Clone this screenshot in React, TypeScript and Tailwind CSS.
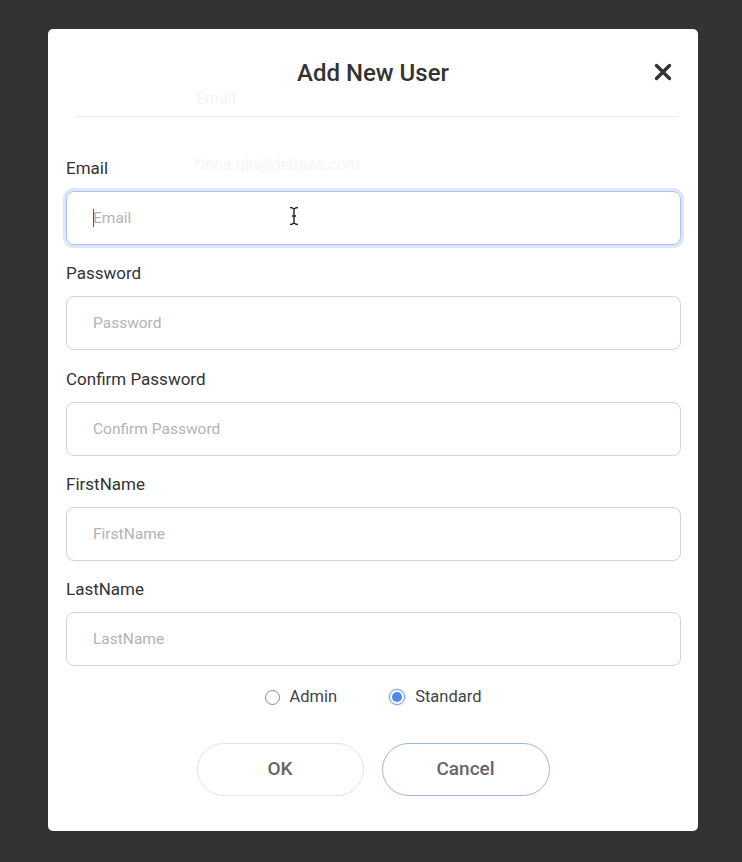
import React, { useState } from 'react';

const FIELDS = [
    { label: 'Email', placeholder: 'Email', focused: true },
    { label: 'Password', placeholder: 'Password' },
    { label: 'Confirm Password', placeholder: 'Confirm Password' },
    { label: 'FirstName', placeholder: 'FirstName' },
    { label: 'LastName', placeholder: 'LastName' },
];

const Radio: React.FC<{ label: string; checked: boolean; onClick: () => void }> = ({ label, checked, onClick }) => (
    <label className="flex items-center gap-[10px] cursor-pointer" onClick={onClick}>
        {checked ? (
            <span className="w-[16px] h-[16px] rounded-full border border-[#7aa2ea] bg-white flex items-center justify-center shadow-[0_0_0_1px_#dbe6fa]">
                <span className="w-[10px] h-[10px] rounded-full bg-[#4f87ec]"></span>
            </span>
        ) : (
            <span className="w-[15px] h-[15px] rounded-full border border-[#8a8a8a] bg-white"></span>
        )}
        <span className="text-[16.5px] leading-[20px] text-[#444]">{label}</span>
    </label>
);

const App: React.FC = () => {
    const [role, setRole] = useState<'admin' | 'standard'>('standard');

    return (
        <div className="w-full h-[862px] bg-[#333333] pt-[29px] pl-[48px] font-['Roboto',sans-serif]">
            <div className="relative w-[650px] h-[802px] bg-white rounded-[5px]">
                {/* ghost text left over from the page behind */}
                <span className="absolute left-[148px] top-[58px] text-[16px] text-[#f4f4f4]">Email</span>
                <span className="absolute left-[146px] top-[124px] text-[16px] text-[#f5f5f5]">*iona.qin@deltaas.com</span>

                {/* Header */}
                <div className="relative h-[87px] flex items-center justify-center">
                    <h2 className="text-[24px] font-medium text-[#333] leading-none">Add New User</h2>
                    <button className="absolute right-[26px] top-[34px] text-[#333]">
                        <svg width="18" height="18" viewBox="0 0 18 18">
                            <path d="M2.5 2.5 L15.5 15.5 M15.5 2.5 L2.5 15.5" stroke="currentColor" strokeWidth="3.4" strokeLinecap="round" />
                        </svg>
                    </button>
                </div>
                <div className="ml-[28px] mr-[20px] h-px bg-[#ececec]"></div>

                {/* Form */}
                <div className="px-[18px] pt-[41px] flex flex-col gap-[18.3px] relative">
                    {FIELDS.map(f => (
                        <div key={f.label}>
                            <div className="text-[17px] leading-[21px] text-[#333] mb-[12px]">{f.label}</div>
                            <div className="relative">
                                <input
                                    placeholder={f.placeholder}
                                    className={
                                        f.focused
                                            ? "w-[615px] h-[54px] rounded-[8px] border border-[#a9c3ec] shadow-[0_0_0_3px_#dbe6f8] pl-[26px] text-[15.5px] text-[#333] placeholder:text-[#b3b3b3] outline-none"
                                            : "w-[615px] h-[54px] rounded-[8px] border border-[#d3d3d3] pl-[26px] text-[15.5px] text-[#333] placeholder:text-[#b3b3b3] outline-none"
                                    }
                                />
                                {f.focused && (
                                    <>
                                        <span className="absolute left-[27px] top-[18px] w-px h-[18px] bg-[#555]"></span>
                                        <svg className="absolute left-[223px] top-[15px]" width="10" height="20" viewBox="0 0 10 20">
                                            <path d="M1 1.5 C3 1.5 4 2 5 3 C6 2 7 1.5 9 1.5 M5 3 V17 M1 18.5 C3 18.5 4 18 5 17 C6 18 7 18.5 9 18.5 M3 10 H7" stroke="#222" strokeWidth="1.4" fill="none" />
                                        </svg>
                                    </>
                                )}
                            </div>
                        </div>
                    ))}
                </div>

                {/* Role */}
                <div className="mt-[21px] flex items-center justify-center gap-[52px]">
                    <Radio label="Admin" checked={role === 'admin'} onClick={() => setRole('admin')} />
                    <Radio label="Standard" checked={role === 'standard'} onClick={() => setRole('standard')} />
                </div>

                {/* Actions */}
                <div className="mt-[36px] flex justify-center gap-[18px]">
                    <button className="w-[167px] h-[53px] rounded-full border border-[#e3e3e3] bg-white text-[19px] font-medium text-[#666]">OK</button>
                    <button className="w-[168px] h-[53px] rounded-full border border-[#9fb6d8] bg-white text-[19px] font-medium text-[#666]">Cancel</button>
                </div>
            </div>
        </div>
    );
};

export default App;
